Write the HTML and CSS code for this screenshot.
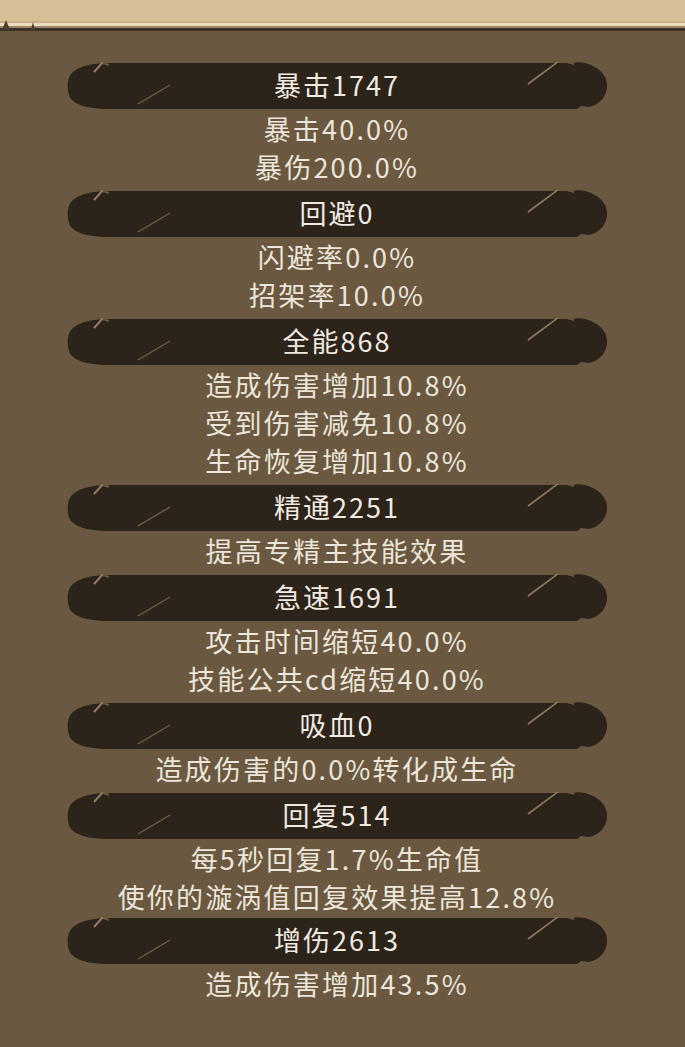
FILE: index.html
```html
<!DOCTYPE html>
<html lang="zh-CN">
<head>
<meta charset="utf-8">
<title>属性</title>
<link rel="stylesheet" href="styles.css">
</head>
<body>
<header class="top-frame">
  <div class="band band-beige"></div>
  <div class="band band-shade"></div>
  <div class="band band-light"></div>
  <div class="band band-mid"></div>
  <div class="band band-dark"></div>
</header>
<main class="stats">
  <section class="group">
    <div class="banner">暴击1747</div>
    <div class="line">暴击40.0%</div>
    <div class="line">暴伤200.0%</div>
  </section>
  <section class="group">
    <div class="banner">回避0</div>
    <div class="line">闪避率0.0%</div>
    <div class="line">招架率10.0%</div>
  </section>
  <section class="group">
    <div class="banner">全能868</div>
    <div class="line">造成伤害增加10.8%</div>
    <div class="line">受到伤害减免10.8%</div>
    <div class="line">生命恢复增加10.8%</div>
  </section>
  <section class="group">
    <div class="banner">精通2251</div>
    <div class="line">提高专精主技能效果</div>
  </section>
  <section class="group">
    <div class="banner">急速1691</div>
    <div class="line">攻击时间缩短40.0%</div>
    <div class="line">技能公共cd缩短40.0%</div>
  </section>
  <section class="group">
    <div class="banner">吸血0</div>
    <div class="line">造成伤害的0.0%转化成生命</div>
  </section>
  <section class="group">
    <div class="banner">回复514</div>
    <div class="line">每5秒回复1.7%生命值</div>
    <div class="line">使你的漩涡值回复效果提高12.8%</div>
  </section>
  <section class="group group-last">
    <div class="banner">增伤2613</div>
    <div class="line">造成伤害增加43.5%</div>
  </section>
</main>
</body>
</html>
```

FILE: styles.css
```css
html, body {
  margin: 0;
  padding: 0;
}
body {
  width: 685px;
  height: 1047px;
  overflow: hidden;
  background: #6a5940;
  font-family: "Noto Sans CJK SC", "Noto Sans", sans-serif;
  color: #ece5d9;
}
.top-frame {
  position: relative;
  display: flex;
  flex-direction: column;
}
.band { width: 100%; }
.band-beige { height: 21px; background: #d6be96; }
.band-shade { height: 2px; background: #c8ad88; }
.band-light { height: 3px; background: #ecdcbc; }
.band-mid { height: 2px; background: #9c8868; }
.band-dark { height: 3px; background: #3a3024; }
.top-frame::before,
.top-frame::after {
  content: "";
  position: absolute;
  top: 20px;
  width: 0;
  height: 0;
  border-left: 4px solid transparent;
  border-right: 4px solid transparent;
  border-bottom: 10px solid #4a3d2c;
}
.top-frame::before { left: 2px; }
.top-frame::after { left: 31px; border-bottom-width: 8px; top: 22px; border-left-width: 2px; border-right-width: 2px; }

.stats {
  width: 540px;
  margin-left: 67px;
  padding-top: 31px;
  display: flex;
  flex-direction: column;
  gap: 4px;
}
.group {
  display: flex;
  flex-direction: column;
  align-items: center;
}
.group-last { margin-top: -3px; }
.banner {
  width: 540px;
  height: 48px;
  line-height: 46px;
  text-align: center;
  font-size: 27px;
  letter-spacing: 2px;
  color: #f0eae1;
  background: url("data:image/svg+xml,%3Csvg xmlns='http://www.w3.org/2000/svg' width='540' height='48' viewBox='0 0 540 48'%3E%3Cpath d='M42,1 L506,1 C512,-1 520,1 526,4 C536,9 541,17 540,26 C539,35 532,43 522,45 L514,44 L510,47 L42,47 C28,47 12,45 5,38 C-1,32 -1,16 6,10 C13,4 26,1 42,1 Z' fill='%232c231b'/%3E%3Cpath d='M27,10 L36,0' stroke='%238f7e62' stroke-width='2'/%3E%3Cpath d='M36,1 L42,3' stroke='%236a5940' stroke-width='2'/%3E%3Cpath d='M71,42 L103,23' stroke='%23706049' stroke-width='1.4'/%3E%3Cpath d='M461,22 L492,-1' stroke='%238a7a5e' stroke-width='1.6'/%3E%3Cpath d='M500,0 L507,2' stroke='%236a5940' stroke-width='2'/%3E%3C/svg%3E") no-repeat center / 540px 48px;
}
.line {
  height: 38px;
  line-height: 38px;
  font-size: 27px;
  letter-spacing: 2.2px;
  white-space: nowrap;
  text-align: center;
}
```
